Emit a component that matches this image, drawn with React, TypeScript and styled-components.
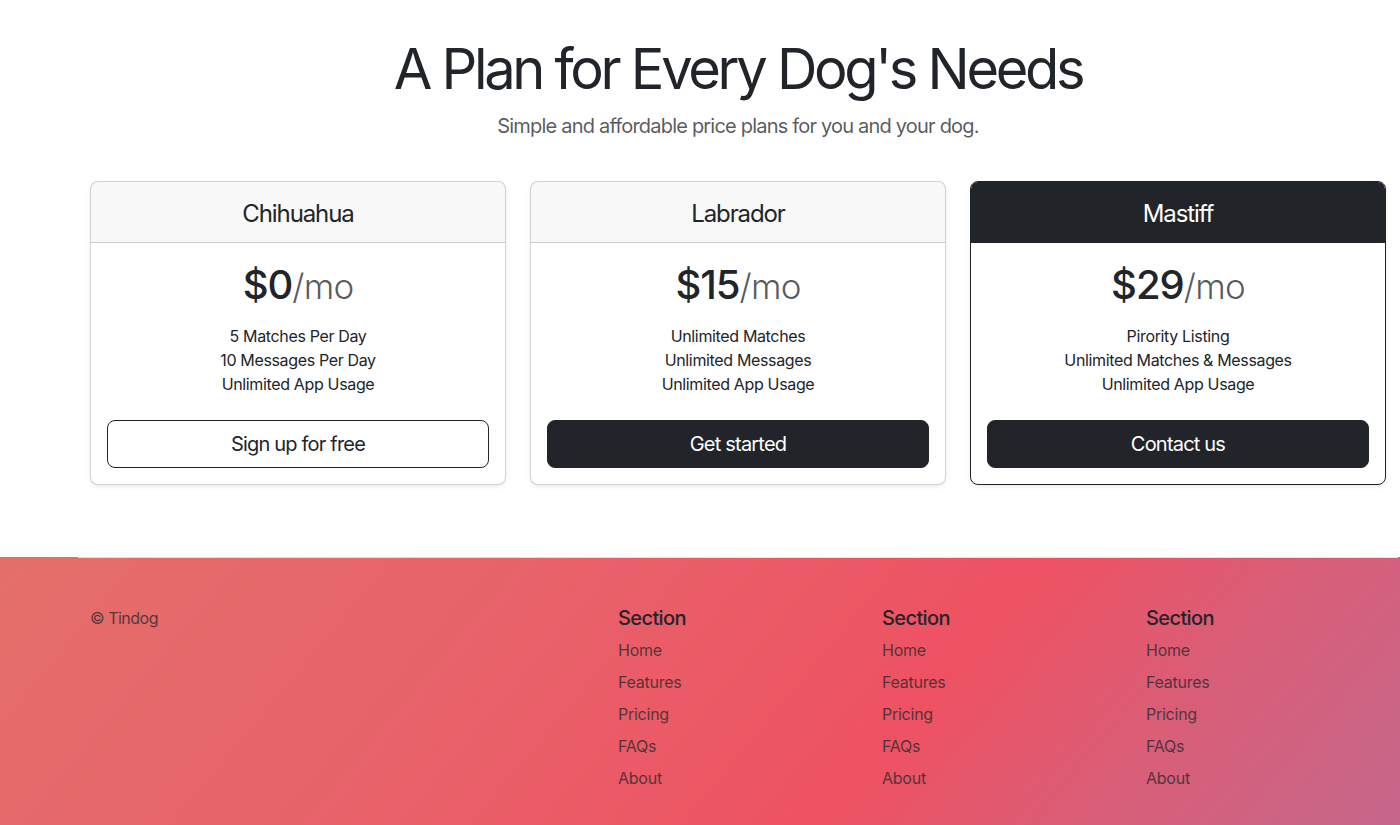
import React from "react";
import styled, { createGlobalStyle } from "styled-components";

const GlobalStyle = createGlobalStyle`
  html, body {
    margin: 0;
    padding: 0;
    background: #fff;
    overflow: hidden;
  }
  body {
    font-family: Inter, "Noto Sans", "Liberation Sans", sans-serif;
    color: #212529;
    font-size: 16px;
    line-height: 1.5;
    -webkit-font-smoothing: antialiased;
  }
  * { box-sizing: border-box; }
`;

const Page = styled.div`
  width: 1400px;
  min-height: 825px;
  display: flex;
  flex-direction: column;
`;

const Container = styled.div`
  width: 1320px;
  margin-left: 78px;
  padding: 0 12px;
`;

const Header = styled.header`
  padding: 36px 16px 24px;
  text-align: center;
`;

const Title = styled.h1`
  margin: 0 0 8px;
  font-size: 56px;
  line-height: 67px;
  font-weight: 400;
  color: #212529;
  letter-spacing: -3.3px;
`;

const Lead = styled.p`
  margin: 0 0 16px;
  font-size: 20px;
  line-height: 30px;
  color: rgba(33, 37, 41, 0.75);
  letter-spacing: -0.8px;
`;

const CardRow = styled.div`
  display: grid;
  grid-template-columns: repeat(3, 1fr);
  margin: 0 -12px;
`;

const Col = styled.div`
  padding: 0 12px;
`;

const Card = styled.div<{ $dark?: boolean }>`
  border: 1px solid ${(p) => (p.$dark ? "#212529" : "rgba(0,0,0,0.175)")};
  border-radius: 8px;
  box-shadow: 0 2px 4px rgba(0, 0, 0, 0.075);
  overflow: hidden;
  text-align: center;
  background: #fff;
`;

const CardHeader = styled.div<{ $dark?: boolean }>`
  padding: 18px 16px 14px;
  background: ${(p) => (p.$dark ? "#212529" : "rgba(33,37,41,0.03)")};
  color: ${(p) => (p.$dark ? "#fff" : "#212529")};
  border-bottom: 1px solid ${(p) => (p.$dark ? "#212529" : "rgba(0,0,0,0.175)")};
`;

const PlanName = styled.h4`
  margin: 0;
  font-size: 24px;
  line-height: 28px;
  font-weight: 400;
  letter-spacing: -1.1px;
`;

const CardBody = styled.div`
  padding: 16px;
`;

const Price = styled.h1`
  margin: 0 0 8px;
  padding-top: 2px;
  font-size: 40px;
  line-height: 48px;
  font-weight: 500;
  color: #212529;
  letter-spacing: -1px;
`;

const Per = styled.small`
  font-size: 0.875em;
  font-weight: 300;
  color: rgba(33, 37, 41, 0.75);
  letter-spacing: -0.8px;
`;

const Features = styled.ul`
  list-style: none;
  padding: 0;
  margin: 14px 0 24px;
  font-size: 16px;
  line-height: 24px;
  letter-spacing: -0.35px;
`;

const Button = styled.button<{ $outline?: boolean }>`
  display: block;
  width: 100%;
  padding: 8px 16px;
  font-family: inherit;
  font-size: 20px;
  line-height: 30px;
  font-weight: 400;
  letter-spacing: -0.8px;
  border-radius: 8px;
  border: 1px solid #212529;
  background: ${(p) => (p.$outline ? "transparent" : "#212529")};
  color: ${(p) => (p.$outline ? "#212529" : "#fff")};
  cursor: pointer;
`;

const Spacer = styled.div`
  height: 72px;
`;

const Footer = styled.footer`
  flex: 1;
  background: linear-gradient(
    130deg,
    #e46f6a 0%,
    #e8626a 35%,
    #ee5262 64%,
    #d95e77 80%,
    #c4678b 100%
  );
`;

const FooterInner = styled.div`
  width: 1320px;
  margin-left: 78px;
  border-top: 1px solid #dee2e6;
  padding-top: 48px;
  padding-bottom: 48px;
  display: grid;
  grid-template-columns: 2fr 1fr 1fr 1fr;
`;

const FooterCol = styled.div`
  padding: 0 12px;
`;

const Copy = styled.small`
  display: block;
  font-size: 16px;
  line-height: 24px;
  color: rgba(33, 37, 41, 0.75);
  letter-spacing: -0.5px;
`;

const SectionTitle = styled.h5`
  margin: 0 0 8px;
  font-size: 20px;
  line-height: 24px;
  font-weight: 500;
  color: #212529;
  letter-spacing: -0.6px;
`;

const LinkList = styled.ul`
  list-style: none;
  margin: 0;
  padding: 0;
  display: flex;
  flex-direction: column;
  gap: 8px;
`;

const FooterLink = styled.a`
  display: block;
  font-size: 16px;
  line-height: 24px;
  color: rgba(33, 37, 41, 0.75);
  text-decoration: none;
  letter-spacing: -0.25px;
`;

const plans = [
  {
    name: "Chihuahua",
    price: "$0",
    features: ["5 Matches Per Day", "10 Messages Per Day", "Unlimited App Usage"],
    cta: "Sign up for free",
    outline: true,
    dark: false,
  },
  {
    name: "Labrador",
    price: "$15",
    features: ["Unlimited Matches", "Unlimited Messages", "Unlimited App Usage"],
    cta: "Get started",
    outline: false,
    dark: false,
  },
  {
    name: "Mastiff",
    price: "$29",
    features: ["Pirority Listing", "Unlimited Matches & Messages", "Unlimited App Usage"],
    cta: "Contact us",
    outline: false,
    dark: true,
  },
];

const links = ["Home", "Features", "Pricing", "FAQs", "About"];

export default function App() {
  return (
    <>
      <GlobalStyle />
      <Page>
        <Container>
          <Header>
            <Title>A Plan for Every Dog's Needs</Title>
            <Lead>Simple and affordable price plans for you and your dog.</Lead>
          </Header>
          <CardRow>
            {plans.map((p) => (
              <Col key={p.name}>
                <Card $dark={p.dark}>
                  <CardHeader $dark={p.dark}>
                    <PlanName>{p.name}</PlanName>
                  </CardHeader>
                  <CardBody>
                    <Price>
                      {p.price}
                      <Per>/mo</Per>
                    </Price>
                    <Features>
                      {p.features.map((f) => (
                        <li key={f}>{f}</li>
                      ))}
                    </Features>
                    <Button $outline={p.outline}>{p.cta}</Button>
                  </CardBody>
                </Card>
              </Col>
            ))}
          </CardRow>
        </Container>
        <Spacer />
        <Footer>
          <FooterInner>
            <FooterCol>
              <Copy>© Tindog</Copy>
            </FooterCol>
            {[0, 1, 2].map((i) => (
              <FooterCol key={i}>
                <SectionTitle>Section</SectionTitle>
                <LinkList>
                  {links.map((l) => (
                    <li key={l}>
                      <FooterLink href="#">{l}</FooterLink>
                    </li>
                  ))}
                </LinkList>
              </FooterCol>
            ))}
          </FooterInner>
        </Footer>
      </Page>
    </>
  );
}
